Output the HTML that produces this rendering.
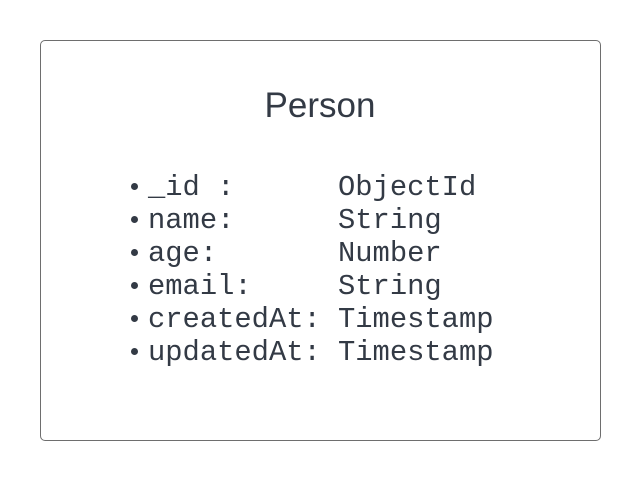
<!DOCTYPE html>
<html><head><style>
html,body{margin:0;padding:0;background:#fff;width:640px;height:480px;overflow:hidden}
.box{position:absolute;left:40px;top:40px;width:559px;height:399px;border:1px solid #6e6e6e;border-radius:5px}
.t{position:absolute;left:0;width:640px;text-align:center;top:86px;font:35px "Liberation Sans",sans-serif;color:#333a45;line-height:40px}
.l{position:absolute;font:28.8px "Liberation Mono",monospace;color:#333a45;white-space:pre;line-height:33px}
.b{position:absolute;width:7px;height:7px;border-radius:50%;background:#333a45}
</style></head><body>
<div class="box"></div>
<div class="t">Person</div>
<div class="l" style="left:148px;top:171px">_id :
name:
age:
email:
createdAt:
updatedAt:</div>
<div class="l" style="left:338px;top:171px">ObjectId
String
Number
String
Timestamp
Timestamp</div>
<div class="b" style="left:131px;top:183px"></div>
<div class="b" style="left:131px;top:216px"></div>
<div class="b" style="left:131px;top:249px"></div>
<div class="b" style="left:131px;top:282px"></div>
<div class="b" style="left:131px;top:315px"></div>
<div class="b" style="left:131px;top:348px"></div>
</body></html>
